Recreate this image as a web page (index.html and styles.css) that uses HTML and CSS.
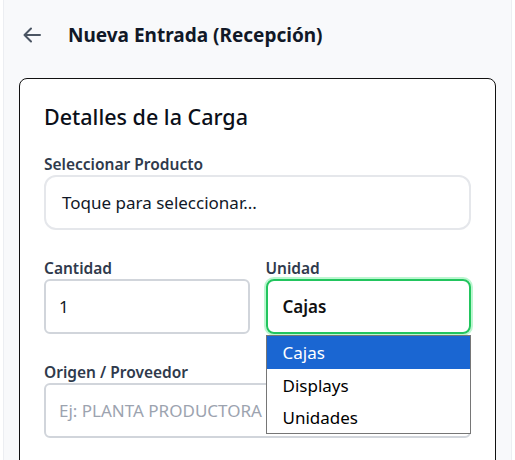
FILE: index.html
```html
<!DOCTYPE html>
<html lang="es">
<head>
<meta charset="utf-8">
<title>Nueva Entrada</title>
<link rel="stylesheet" href="styles.css">
</head>
<body>
<div class="app">
  <header class="topbar">
    <span class="back" aria-label="Volver">
      <svg width="18" height="16" viewBox="0 0 18 16" fill="none" stroke="#4b5563" stroke-width="2" stroke-linecap="round" stroke-linejoin="round"><path d="M17 8H1.5M8 1.5L1.5 8L8 14.5"/></svg>
    </span>
    <h1 class="title">Nueva Entrada (Recepción)</h1>
  </header>
  <section class="card">
    <h2 class="card-title">Detalles de la Carga</h2>
    <div class="field">
      <label class="label">Seleccionar Producto</label>
      <div class="picker">Toque para seleccionar...</div>
    </div>
    <div class="row">
      <div class="field">
        <label class="label">Cantidad</label>
        <div class="input">1</div>
      </div>
      <div class="field select-wrap">
        <label class="label">Unidad</label>
        <div class="select">Cajas</div>
        <ul class="options">
          <li class="opt active">Cajas</li>
          <li class="opt">Displays</li>
          <li class="opt">Unidades</li>
        </ul>
      </div>
    </div>
    <div class="field">
      <label class="label">Origen / Proveedor</label>
      <div class="input placeholder">Ej: PLANTA PRODUCTORA</div>
    </div>
  </section>
</div>
</body>
</html>
```
FILE: styles.css
```css
* { box-sizing: border-box; }
html, body { margin: 0; padding: 0; height: 100%; }
body {
  background: #ffffff;
  font-family: "Noto Sans", "Open Sans", sans-serif;
  color: #111827;
  overflow: hidden;
}
.app {
  margin: 0 3px 0 3px;
  min-height: 100%;
  background: #f8f9fb;
  border-left: 1px solid #eceef2;
  border-right: 1px solid #eceef2;
  padding: 0 15px;
}
.topbar {
  height: 78px;
  display: flex;
  align-items: center;
  padding-bottom: 9px;
}
.back {
  width: 49px;
  display: flex;
  align-items: center;
  padding-left: 4px;
}
.title {
  margin: 0;
  font-size: 19px;
  font-weight: 700;
  color: #111827;
}
.card {
  background: #fff;
  border: 1px solid #111;
  border-radius: 8px;
  padding: 24px 24px 30px;
  min-height: 420px;
}
.card-title {
  margin: 0 0 24px;
  font-size: 21.5px;
  font-weight: 500;
  line-height: 28px;
  color: #0b0f19;
}
.field { display: flex; flex-direction: column; }
.label {
  font-size: 15.5px;
  font-weight: 600;
  color: #2f3a4c;
  line-height: 18px;
  margin-bottom: 2px;
}
.picker {
  height: 55px;
  border: 2px solid #e5e7eb;
  border-radius: 12px;
  display: flex;
  align-items: center;
  padding: 0 16px;
  font-size: 17px;
  color: #111827;
}
.row {
  display: grid;
  grid-template-columns: 1fr 1fr;
  gap: 16px;
  margin-top: 29px;
}
.input {
  height: 55px;
  border: 2px solid #d1d5db;
  border-radius: 6px;
  display: flex;
  align-items: center;
  padding: 0 13px;
  font-size: 17px;
  color: #111827;
}
.placeholder { color: #9ca3af; }
.select-wrap { position: relative; }
.select {
  height: 55px;
  border: 2px solid #22c55e;
  border-radius: 8px;
  box-shadow: 0 0 0 2px #bbf7d0;
  display: flex;
  align-items: center;
  padding: 0 15px;
  font-size: 17px;
  font-weight: 600;
  color: #111;
}
.options {
  position: absolute;
  left: 0;
  right: 0;
  top: 76px;
  margin: 0;
  padding: 0;
  list-style: none;
  background: #fff;
  border: 1px solid #767676;
  z-index: 2;
}
.opt {
  height: 32px;
  display: flex;
  align-items: center;
  padding: 0 16px;
  font-size: 17px;
  color: #000;
}
.opt.active { background: #1a66d2; color: #fff; height: 33px; }
.row + .field { margin-top: 29px; }
```
